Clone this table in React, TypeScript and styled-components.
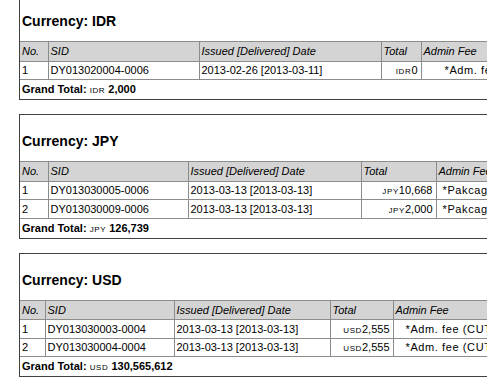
import styled, { createGlobalStyle } from 'styled-components';

type Row = { no: number; sid: string; issued: string; total: string; fee: string };
type Group = { code: string; cols: number[]; feeIndent: number; rows: Row[]; grand: string };

const groups: Group[] = [
  {
    code: 'IDR',
    cols: [28, 151, 182, 40, 240],
    feeIndent: 23,
    rows: [
      { no: 1, sid: 'DY013020004-0006', issued: '2013-02-26 [2013-03-11]', total: '0', fee: '*Adm. fee (CUT OFF)' },
    ],
    grand: '2,000',
  },
  {
    code: 'JPY',
    cols: [28, 140, 173, 75, 240],
    feeIndent: 6,
    rows: [
      { no: 1, sid: 'DY013030005-0006', issued: '2013-03-13 [2013-03-13]', total: '10,668', fee: '*Pakcage fee' },
      { no: 2, sid: 'DY013030009-0006', issued: '2013-03-13 [2013-03-13]', total: '2,000', fee: '*Pakcage fee' },
    ],
    grand: '126,739',
  },
  {
    code: 'USD',
    cols: [25, 129, 156, 63, 240],
    feeIndent: 12,
    rows: [
      { no: 1, sid: 'DY013030003-0004', issued: '2013-03-13 [2013-03-13]', total: '2,555', fee: '*Adm. fee (CUT OFF)' },
      { no: 2, sid: 'DY013030004-0004', issued: '2013-03-13 [2013-03-13]', total: '2,555', fee: '*Adm. fee (CUT OFF)' },
    ],
    grand: '130,565,612',
  },
];

const GlobalStyle = createGlobalStyle`
  html, body {
    margin: 0;
    background: #fff;
    overflow: hidden;
  }
  body {
    font-family: "Liberation Sans", Arial, sans-serif;
    font-size: 11px;
    color: #000;
  }
`;

export default function App() {
  return (
    <>
      <GlobalStyle />
      <Page>
        {groups.map((g) => (
          <CurrencyBox key={g.code}>
            <Title>Currency: {g.code}</Title>
            <Table $width={g.cols.reduce((a, b) => a + b, 0)}>
              <colgroup>
                {g.cols.map((w, i) => (
                  <Col key={i} $w={w} />
                ))}
              </colgroup>
              <thead>
                <tr>
                  <Th>No.</Th>
                  <Th>SID</Th>
                  <Th>Issued [Delivered] Date</Th>
                  <Th>Total</Th>
                  <Th>Admin Fee</Th>
                </tr>
              </thead>
              <tbody>
                {g.rows.map((r) => (
                  <tr key={r.no}>
                    <Td>{r.no}</Td>
                    <Td>{r.sid}</Td>
                    <Td>{r.issued}</Td>
                    <Td $align="right">
                      <Code>{g.code}</Code>
                      {r.total}
                    </Td>
                    <FeeTd $indent={g.feeIndent}>{r.fee}</FeeTd>
                  </tr>
                ))}
              </tbody>
            </Table>
            <GrandTotal>
              Grand Total: <Code>{g.code}</Code> {g.grand}
            </GrandTotal>
          </CurrencyBox>
        ))}
      </Page>
    </>
  );
}

const Page = styled.div`
  display: flex;
  flex-direction: column;
  align-items: flex-start;
  gap: 14px;
  margin-top: -6px;
  padding-left: 19px;
  width: 900px;
`;

const CurrencyBox = styled.div`
  border: 1px solid #404040;
  width: 640px;
`;

const Title = styled.h3`
  margin: 0;
  padding: 18px 2px 12px;
  font-size: 14px;
  line-height: 16px;
  font-weight: bold;
`;

const Table = styled.table<{ $width: number }>`
  border-collapse: collapse;
  table-layout: fixed;
  width: ${(p) => p.$width}px;
`;

const Col = styled.col<{ $w: number }>`
  width: ${(p) => p.$w}px;
`;

const Th = styled.th`
  background: #d4d4d4;
  border: 1px solid #8c8c8c;
  padding: 0 2px;
  height: 18.5px;
  font-style: italic;
  font-weight: normal;
  text-align: left;
  white-space: nowrap;
  &:first-child {
    border-left: none;
  }
`;

const Td = styled.td<{ $align?: 'left' | 'right' }>`
  border: 1px solid #8c8c8c;
  padding: 0 3px 0 2px;
  height: 17.5px;
  text-align: ${(p) => p.$align ?? 'left'};
  white-space: nowrap;
  overflow: hidden;
  &:first-child {
    border-left: none;
  }
`;

const FeeTd = styled(Td)<{ $indent: number }>`
  padding-left: ${(p) => p.$indent}px;
  letter-spacing: 0.6px;
`;

const Code = styled.span`
  font-size: 8px;
  letter-spacing: 0.6px;
  text-transform: uppercase;
  font-weight: normal;
`;

const GrandTotal = styled.div`
  padding: 1px 2px 0;
  line-height: 17px;
  font-weight: bold;
`;
